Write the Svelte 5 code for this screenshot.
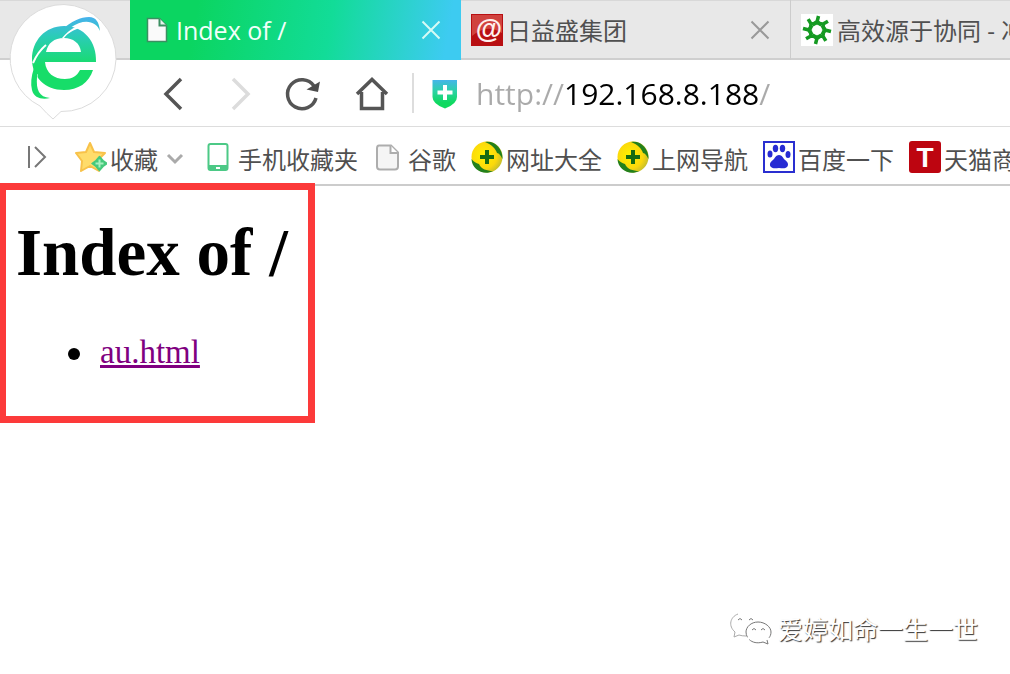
<script>
    let address = $state('http://192.168.8.188/');

    const tabs = [
        {title: 'Index of /', icon: 'page', active: true},
        {title: '日益盛集团', icon: 'at', active: false},
        {title: '高效源于协同 - 冲', icon: 'burst', active: false}
    ];

    const bookmarks = [
        {title: '收藏', icon: 'star', menu: true},
        {title: '手机收藏夹', icon: 'phone'},
        {title: '谷歌', icon: 'doc'},
        {title: '网址大全', icon: 'plus'},
        {title: '上网导航', icon: 'plus'},
        {title: '百度一下', icon: 'paw'},
        {title: '天猫商城', icon: 'tmall'}
    ];

    const files = ['au.html'];
    const spikes = [0, 45, 90, 135, 180, 225, 270, 315];
</script>

{#snippet icon(name)}
    <svg class="icon" viewBox="0 0 32 32" aria-hidden="true">
        {#if name === 'page'}
            <path d="M7.500 4.500h12l7 7v16h-19z" fill="#fafafa" stroke="#3c8f62" stroke-width="1.500" />
            <path d="M19.500 4.500v7h7" fill="#e6f4ec" stroke="#3c8f62" stroke-width="2" />
        {:else if name === 'at'}
            <rect width="32" height="32" fill="#b80f12" />
            <path d="M1 1h30v18C20 12 10 14 1 22z" fill="#d0423e" />
            <text x="18" y="24" text-anchor="middle" class="at">@</text>
        {:else if name === 'burst'}
            <rect width="32" height="32" fill="#fff" />
            {#each spikes as angle}
                <path d="M11.500 11L16 7.500L20.500 11M16 8L17.500 2" transform={`rotate(${angle} 16 16)`} fill="none" stroke="#159a22" stroke-width="3.500" />
            {/each}
        {:else if name === 'star'}
            <path d="M15 2l4 9 11 1-8 8 2 10-9-5-9 5 1-10-6-8 10-1z" fill="#ffdc6b" stroke="#f8c24a" stroke-width="2" stroke-linejoin="round" />
            <path d="M24.500 15.500l3.500 4 4 3-4 3-3.500 4-3.500-4-4-3 4-3z" fill="#45c97c" stroke="#45c97c" stroke-width="1.500" stroke-linejoin="round" />
            <path d="M24.500 18.500v8M20.500 22.500h8" stroke="#a8f0bf" stroke-width="2" />
        {:else if name === 'phone'}
            <rect x="5.500" y="3" width="19" height="26" rx="2" fill="#fff" stroke="#4cc986" stroke-width="2" />
            <path d="M5 24h20v5H5z" fill="#4cc986" />
            <path d="M13 26h4v2h-4z" fill="#fff" />
        {:else if name === 'doc'}
            <path d="M6 4.500h12l7 7v14q0 3-3 3H7q-3 0-3-3v-18q0-3 2-3z" fill="#f5f5f5" stroke="#adadad" stroke-width="2" />
            <path d="M17.500 4.500v7.500h7.500" fill="#fff" stroke="#adadad" stroke-width="2" />
        {:else if name === 'plus'}
            <circle cx="16" cy="16" r="15.500" fill="url(#ball)" />
            <path d="M14 1C24-1 32 8 31.500 18C30 15 28 12 26 12C25 8 20 3 14 1z" fill="#23801c" />
            <path d="M0.500 18C3 21 5 22 8 23C10 28 16 30 22 30C13 35 1 29 0.500 18z" fill="#23801c" />
            <path d="M16 9v14M9 16h14" stroke="#176b12" stroke-width="4" />
        {:else if name === 'paw'}
            <rect x="1" y="1" width="30" height="30" fill="#fff" stroke="#2a2fd0" stroke-width="2" />
            <g fill="#272bd3">
                <ellipse cx="7" cy="13" rx="2.500" ry="3.500" />
                <ellipse cx="12.500" cy="7.500" rx="2.700" ry="3.700" />
                <ellipse cx="19.500" cy="7.500" rx="2.700" ry="3.700" />
                <ellipse cx="25" cy="13.500" rx="2.500" ry="3.500" />
                <path d="M16 14c3 0 4 3 6 5 3 2 4 5 2 7s-5 1-8 1-6 1-8-1-1-5 2-7c2-2 3-5 6-5z" />
            </g>
        {:else if name === 'tmall'}
            <rect width="32" height="32" rx="3" fill="#bd0510" />
            <text x="16" y="26" text-anchor="middle" class="tee">T</text>
        {/if}
    </svg>
{/snippet}

<svg class="defs" aria-hidden="true">
    <defs>
        <radialGradient id="ball" cx="40%" cy="45%" r="60%">
            <stop offset="0" stop-color="#fff200" />
            <stop offset="0.700" stop-color="#fbd80c" />
            <stop offset="1" stop-color="#c9c02a" />
        </radialGradient>
    </defs>
</svg>

<div class="browser">
    <header>
        <svg class="logo" viewBox="0 0 120 122" role="img" aria-label="360">
            <defs>
                <linearGradient id="brand" x1="0" y1="16" x2="0" y2="66" gradientUnits="userSpaceOnUse">
                    <stop offset="0" stop-color="#48b0f0" />
                    <stop offset="0.400" stop-color="#2bccb8" />
                    <stop offset="1" stop-color="#17dd69" />
                </linearGradient>
            </defs>
            <path d="M64 4.500a53.500 53.500 0 1 1-3 107l-8 7.500q-6-5-13-13A53.500 53.500 0 0 1 64 4.500z" fill="#fff" stroke="#dcdcdc" />
            <g fill="url(#brand)">
                <path fill-rule="evenodd" d="M96 62C97 42 84 26 64 26C45 26 32 41 32 59C32 77 45 90 64 90C78 90 89 83 93 70H80C77 76 72 79 65 79C54 79 46 73 45 62zM46 52H81C80 43 73 38 64 38C54 38 48 43 46 52z" />
                <path d="M62 38C66 33 71 29 77 26L80 28C73 30 68 33 64 38z" fill="#fff" />
                <path d="M46 45C40 50 36 56 33 63" fill="none" stroke="#fff" stroke-width="2" />
                <path d="M37 74C35 82 35 88 38 94" fill="none" stroke="#fff" stroke-width="2" />
                <path d="M62 30C71 21 81 17 89 17C96 17 99 22 100 31C96 21 84 18 70 28z" />
                <path d="M46 46C35 60 29 78 32 90C34 98 42 100 50 98C39 97 36 90 37 77C39 64 42 54 46 46z" />
            </g>
        </svg>
        <nav class="tabs" aria-label="Tabs">
            {#each tabs as tab}
                <div class="tab" class:active={tab.active}>
                    <a href="#tab">{@render icon(tab.icon)}<span>{tab.title}</span></a>
                    <button class="close" aria-label="Close tab">
                        <svg width="20" height="20" viewBox="0 0 20 20"><path d="M1.500 1.500l17 17M18.500 1.500l-17 17" fill="none" stroke="currentColor" stroke-width="2" /></svg>
                    </button>
                </div>
            {/each}
        </nav>
    </header>

    <div class="toolbar">
        <button aria-label="Back">
            <svg viewBox="0 0 66 40"><path d="M40 6L25 21L40 36" stroke="#555" stroke-width="3.500" /></svg>
        </button>
        <button aria-label="Forward" disabled>
            <svg viewBox="0 0 66 40"><path d="M26 6L41 21L26 36" stroke="#dcdcdc" stroke-width="3.500" /></svg>
        </button>
        <button aria-label="Reload">
            <svg viewBox="0 0 66 40">
                <path d="M41 13A14.500 14.500 0 1 0 43 25" stroke="#555" stroke-width="3.500" />
                <path d="M47 8.500L45 19L33.500 16.500z" fill="#4c4c4c" />
            </svg>
        </button>
        <button aria-label="Home">
            <svg viewBox="0 0 66 40">
                <path d="M22.500 19V35.500H43.500V19M18 21L33 6.500L48 21" stroke="#555" stroke-width="3.500" />
            </svg>
        </button>
        <div class="address">
            <svg class="shield" width="26" height="30" viewBox="0 0 26 30" aria-hidden="true">
                <defs>
                    <linearGradient id="safe" x1="0" y1="0" x2="0" y2="1">
                        <stop offset="0" stop-color="#45b5ea" />
                        <stop offset="0.400" stop-color="#2bd3a4" />
                        <stop offset="0.800" stop-color="#0fd95f" />
                    </linearGradient>
                </defs>
                <path d="M0.500 1H25V18Q25 25 13 29.500Q0.500 25 0.500 18z" fill="url(#safe)" />
                <path d="M13 6v15M5.500 13.500h15" stroke="#fff" stroke-width="4" />
            </svg>
            <input type="text" aria-label="Address" bind:value={address} spellcheck="false" />
        </div>
    </div>

    <nav class="bookmarks" aria-label="Bookmarks">
        <button aria-label="Show sidebar">
            <svg class="icon" viewBox="0 0 32 32"><path d="M1 5v22M7 6l10 10-10 10" fill="none" stroke="#777" stroke-width="2" /></svg>
        </button>
        {#each bookmarks as mark}
            <a href="#bookmark">{@render icon(mark.icon)}<span>{mark.title}</span></a>
            {#if mark.menu}
                <button class="more" aria-label="More">
                    <svg width="30" height="32" viewBox="0 0 30 32"><path d="M10 15l7 7 7-7" fill="none" stroke="#aaa" stroke-width="3" /></svg>
                </button>
            {/if}
        {/each}
    </nav>

    <main>
        <h1>Index of /</h1>
        <ul>
            {#each files as file}
                <li><a href="#file">{file}</a></li>
            {/each}
        </ul>
    </main>

    <div class="watermark">
        <svg width="42" height="34" viewBox="0 0 42 34" fill="#fff" stroke="#aaa" aria-hidden="true">
            <path d="M16 25q-4 0-7-1l-5 2 1-5C-2 15 0 6 8 3" />
            <path d="M28 11c7 0 13 5 13 10 0 4-2 6-4 8l1 4-5-2C23 34 16 28 16 21c0-5 5-10 12-10z" stroke="#777" stroke-dasharray="24 3" />
            <path d="M8 9q2-3 4 0M19 9q2-3 4 0M22 19q2-3 4 0M31 19q2-3 4 0" fill="none" stroke="#777" />
        </svg>
        <span>爱婷如命一生一世</span>
    </div>
</div>

<style>
    :global(body) {
        margin: 0;
        background: #fff;
    }

    .browser {
        min-height: 100vh;
        overflow: hidden;
        font-family: "Open Sans", "Noto Sans CJK SC", sans-serif;
        font-size: 24px;
        color: #505050;
    }

    .defs {
        position: absolute;
        width: 0;
        height: 0;
    }

    button {
        flex: none;
        display: flex;
        border: 0;
        padding: 0;
        background: none;
        color: inherit;
    }

    .icon {
        flex: none;
        width: 32px;
        height: 32px;
    }

    .at {
        font: bold 27px "Liberation Sans", sans-serif;
        fill: #fff0ee;
    }

    .tee {
        font: bold 28px "Liberation Sans", sans-serif;
        fill: #fff;
    }

    header {
        position: relative;
        box-sizing: border-box;
        height: 60px;
        padding-left: 130px;
        background: #e8e8e8;
        box-shadow: inset 0 1px #d8d8d8, inset 0 -2px #cfcfcf;
    }

    /* hangs over the toolbar below */
    .logo {
        position: absolute;
        z-index: 1;
        left: 0;
        top: 0;
        width: 120px;
        height: 122px;
    }

    .tabs {
        display: flex;
        height: 100%;
        overflow: hidden;
    }

    .tab {
        flex: none;
        box-sizing: border-box;
        display: flex;
        align-items: center;
        width: 330px;
        padding: 0 20px 0 10px;
        border-right: 1px solid #ccc;
        color: #505050;
    }

    .tab a {
        flex: 1;
        display: flex;
        align-items: center;
        gap: 4px;
        min-width: 0;
        padding-bottom: 1px;
        white-space: nowrap;
        color: inherit;
        text-decoration: none;
    }

    .tab.active {
        width: 331px;
        border: 0;
        color: #f2fffa;
        font-size: 25px;
        background: linear-gradient(100deg, #0bd561 20%, #12dc98 60%, #3dcbf1 95%);
    }

    .close {
        color: #999;
    }

    .active .close {
        color: #d5fbf5;
    }

    .toolbar {
        display: flex;
        align-items: center;
        height: 66px;
        padding-left: 141px;
        border-bottom: 1px solid #ddd;
    }

    .toolbar button svg {
        width: 66px;
        height: 40px;
        fill: none;
    }

    .address {
        flex: 1;
        display: flex;
        align-items: center;
        gap: 18px;
        height: 40px;
        margin-left: 7px;
        padding-left: 18px;
        border-left: 2px solid #ddd;
    }

    .shield {
        padding-top: 2px;
    }

    /* scheme and path stay grey, the host is black */
    input {
        flex: 1;
        min-width: 0;
        height: 44px;
        border: 0;
        padding: 0;
        outline: 0;
        font: 30px "Open Sans", sans-serif;
        color: transparent;
        caret-color: #000;
        background: linear-gradient(90deg, #aaa 88px, #000 88px, #000 283px, #aaa 283px);
        background-clip: text;
    }

    .bookmarks {
        display: flex;
        align-items: center;
        gap: 15px;
        height: 57px;
        padding: 0 0 0 28px;
        border-bottom: 2px solid #ccc;
        overflow: hidden;
        white-space: nowrap;
    }

    .bookmarks a {
        flex: none;
        display: flex;
        align-items: center;
        gap: 3px;
        color: #505050;
        text-decoration: none;
    }

    .bookmarks .icon {
        padding-top: 2px;
    }

    .bookmarks span {
        padding-top: 6px;
    }

    .more {
        margin-left: -15px;
    }

    main {
        position: relative;
        width: fit-content;
        margin-top: -3px;
        padding: 24px 20px 44px 10px;
        border: 7px solid #fc3a3a;
        border-left-width: 6px;
        font-family: "Liberation Serif", serif;
        font-size: 33px;
        line-height: 40px;
        color: #000;
    }

    h1 {
        margin: 0 0 42px;
        font-size: 67px;
        line-height: 76px;
    }

    ul {
        margin: 0;
        padding-left: 52px;
        list-style: none;
    }

    li {
        display: flex;
        align-items: center;
        gap: 20px;
    }

    li::before {
        content: "";
        width: 12px;
        height: 12px;
        margin-top: 4px;
        border-radius: 50%;
        background: #000;
    }

    li a {
        color: #800080;
    }

    .watermark {
        position: absolute;
        right: 32px;
        bottom: 28px;
        display: flex;
        align-items: center;
        gap: 6px;
        font-size: 25px;
        color: #fff;
        text-shadow: 1px 1px 1px #333;
    }
</style>
